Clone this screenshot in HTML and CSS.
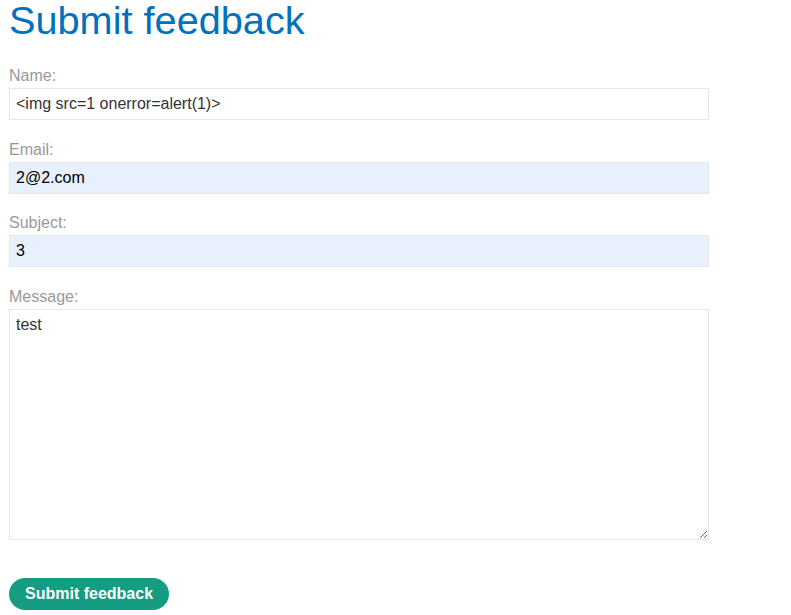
FILE: index.html
```html
<!DOCTYPE html>
<html lang="en">
<head>
<meta charset="utf-8">
<title>Submit feedback</title>
<link rel="stylesheet" href="styles.css">
</head>
<body>
<main class="page">
  <h1 class="title">Submit feedback</h1>
  <form class="feedback">
    <label class="field-label" for="name">Name:</label>
    <input class="field" id="name" type="text" value="&lt;img src=1 onerror=alert(1)&gt;">
    <label class="field-label" for="email">Email:</label>
    <input class="field autofilled" id="email" type="text" value="2@2.com">
    <label class="field-label" for="subject">Subject:</label>
    <input class="field autofilled" id="subject" type="text" value="3">
    <label class="field-label" for="message">Message:</label>
    <textarea class="field message" id="message">test</textarea>
    <button class="button" type="button">Submit feedback</button>
  </form>
</main>
</body>
</html>
```
FILE: styles.css
```css
html, body {
  margin: 0;
  padding: 0;
  background: #ffffff;
}
body {
  font-family: "Liberation Sans", Arial, sans-serif;
  color: #333333;
}
.page {
  padding: 0 9px;
}
.title {
  margin: 0;
  font-size: 39.7px;
  line-height: 46px;
  margin-top: -3px;
  font-weight: normal;
  color: #0071bc;
}
.feedback {
  display: flex;
  flex-direction: column;
  align-items: flex-start;
  margin-top: 23px;
}
.field-label {
  font-size: 16px;
  line-height: 20px;
  color: #999999;
  margin-bottom: 2px;
}
.field {
  box-sizing: border-box;
  width: 700px;
  height: 32px;
  margin: 0 0 19.7px 0;
  padding: 0 6px;
  border: 1px solid #e6e6e6;
  border-radius: 0;
  background: #ffffff;
  font-family: "Liberation Sans", Arial, sans-serif;
  font-size: 16px;
  color: #333333;
  outline: none;
}
.autofilled {
  background: #e8f0fe;
  color: #000000;
}
.message {
  height: 231px;
  padding: 6px 6px;
  line-height: 18px;
  margin-bottom: 38px;
}
.button {
  height: 32px;
  padding: 0 16px;
  border: 0;
  border-radius: 16px;
  background: #169c80;
  color: #ffffff;
  font-family: "Liberation Sans", Arial, sans-serif;
  font-size: 16px;
  font-weight: bold;
  cursor: pointer;
}
```
